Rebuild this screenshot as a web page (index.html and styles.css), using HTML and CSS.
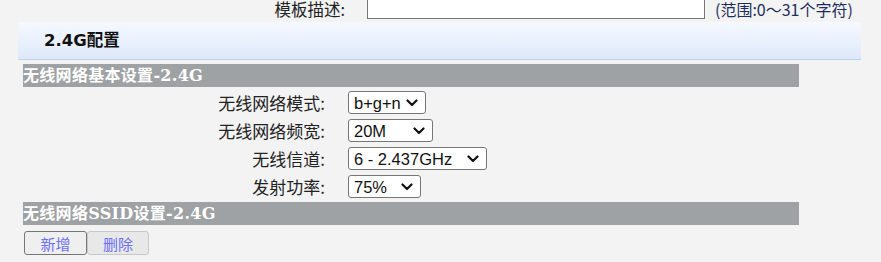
FILE: index.html
```html
<!DOCTYPE html>
<html lang="zh-CN">
    <head>
        <meta charset="utf-8">
        <title>2.4G配置</title>
        <link rel="stylesheet" href="styles.css">
    </head>
    <body>
        <div class="top-row">
            <span class="field-label">模板描述:</span>
            <input class="text-input" type="text">
            <span class="hint">(范围:0～31个字符)</span>
        </div>

        <div class="section-title">2.4G配置</div>

        <div class="group">
            <div class="bar">无线网络基本设置-2.4G</div>

            <div class="form">
                <div class="form-row">
                    <span class="row-label">无线网络模式:</span>
                    <span class="select w-mode">
                        <select><option>b+g+n</option></select>
                        <svg width="12" height="8" viewBox="0 0 12 8"><polyline points="1.5,1.5 6,6 10.5,1.5" /></svg>
                    </span>
                </div>
                <div class="form-row">
                    <span class="row-label">无线网络频宽:</span>
                    <span class="select w-band">
                        <select><option>20M</option></select>
                        <svg width="12" height="8" viewBox="0 0 12 8"><polyline points="1.5,1.5 6,6 10.5,1.5" /></svg>
                    </span>
                </div>
                <div class="form-row">
                    <span class="row-label">无线信道:</span>
                    <span class="select w-channel">
                        <select><option>6 - 2.437GHz</option></select>
                        <svg width="12" height="8" viewBox="0 0 12 8"><polyline points="1.5,1.5 6,6 10.5,1.5" /></svg>
                    </span>
                </div>
                <div class="form-row">
                    <span class="row-label">发射功率:</span>
                    <span class="select w-power">
                        <select><option>75%</option></select>
                        <svg width="12" height="8" viewBox="0 0 12 8"><polyline points="1.5,1.5 6,6 10.5,1.5" /></svg>
                    </span>
                </div>
            </div>

            <div class="bar">无线网络SSID设置-2.4G</div>

            <div class="actions">
                <button class="btn">新增</button>
                <button class="btn btn-disabled">删除</button>
            </div>
        </div>
    </body>
</html>
```

FILE: styles.css
```css
body {
    margin: 0;
    background-color: #f3f3f3;
    font-family: "Noto Sans CJK SC", "Liberation Sans", sans-serif;
    color: #222;
    overflow: hidden;
}

/* top row is half scrolled out of view */
.top-row {
    display: flex;
    align-items: flex-end;
    height: 19px;
}

.field-label {
    width: 345px;
    text-align: right;
    font-size: 16.5px;
    line-height: 19px;
}

.text-input {
    box-sizing: border-box;
    width: 338px;
    height: 19px;
    margin: 0 10px 0 22px;
    border: 1px solid #767676;
    border-top: none;
    background-color: white;
}

.hint {
    font-size: 16px;
    line-height: 19px;
    color: #1f2d5c;
}

.section-title {
    box-sizing: border-box;
    width: 843px;
    height: 38px;
    margin: 3px 0 0 18px;
    padding-left: 26px;
    line-height: 37px;
    font-family: "DejaVu Sans", "Noto Sans CJK SC", sans-serif;
    font-size: 16.5px;
    font-weight: bold;
    color: #111;
    background: linear-gradient(#f6f9ff, #dde9fa);
    border-bottom: 1px solid #bcd3ef;
}

.group {
    width: 776px;
    margin: 4px 0 0 23px;
}

.bar {
    height: 23px;
    line-height: 24px;
    font-family: "DejaVu Serif", "Noto Sans CJK SC", serif;
    font-size: 16px;
    font-weight: bold;
    color: white;
    background-color: #9fa2a4;
    letter-spacing: 0.3px;
}

.form {
    display: flex;
    flex-direction: column;
    gap: 5px;
    padding: 4px 0;
}

.form-row {
    display: grid;
    grid-template-columns: 302px auto;
    column-gap: 23px;
    align-items: center;
    height: 23px;
}

.row-label {
    text-align: right;
    font-size: 17px;
    line-height: 20px;
    color: #222;
}

.select {
    box-sizing: border-box;
    display: inline-flex;
    align-items: center;
    height: 23px;
    padding: 0 7px 0 5px;
    border: 1px solid #767676;
    border-radius: 3px;
    background-color: white;
}

.select select {
    flex: 1;
    min-width: 0;
    padding: 0;
    border: none;
    outline: none;
    background: transparent;
    appearance: none;
    font-family: "Liberation Sans", Arial, sans-serif;
    font-size: 16.5px;
    color: #111;
}

.select svg {
    fill: none;
    stroke: #111;
    stroke-width: 2.2;
    stroke-linecap: round;
    stroke-linejoin: round;
}

.w-mode {
    width: 78px;
}

.w-band {
    width: 85px;
}

.w-channel {
    width: 139px;
}

.w-power {
    width: 73px;
}

.actions {
    display: flex;
    margin: 6px 0 0 1px;
}

.btn {
    box-sizing: border-box;
    width: 63px;
    height: 24px;
    padding: 0;
    border: 1px solid #767676;
    border-radius: 3px;
    background-color: #efefef;
    font-family: "Noto Sans CJK SC", sans-serif;
    font-size: 15px;
    color: #6d70f2;
}

.btn-disabled {
    width: 62px;
    border-color: #c8c8c8;
    background-color: #e8e8e8;
}
```
